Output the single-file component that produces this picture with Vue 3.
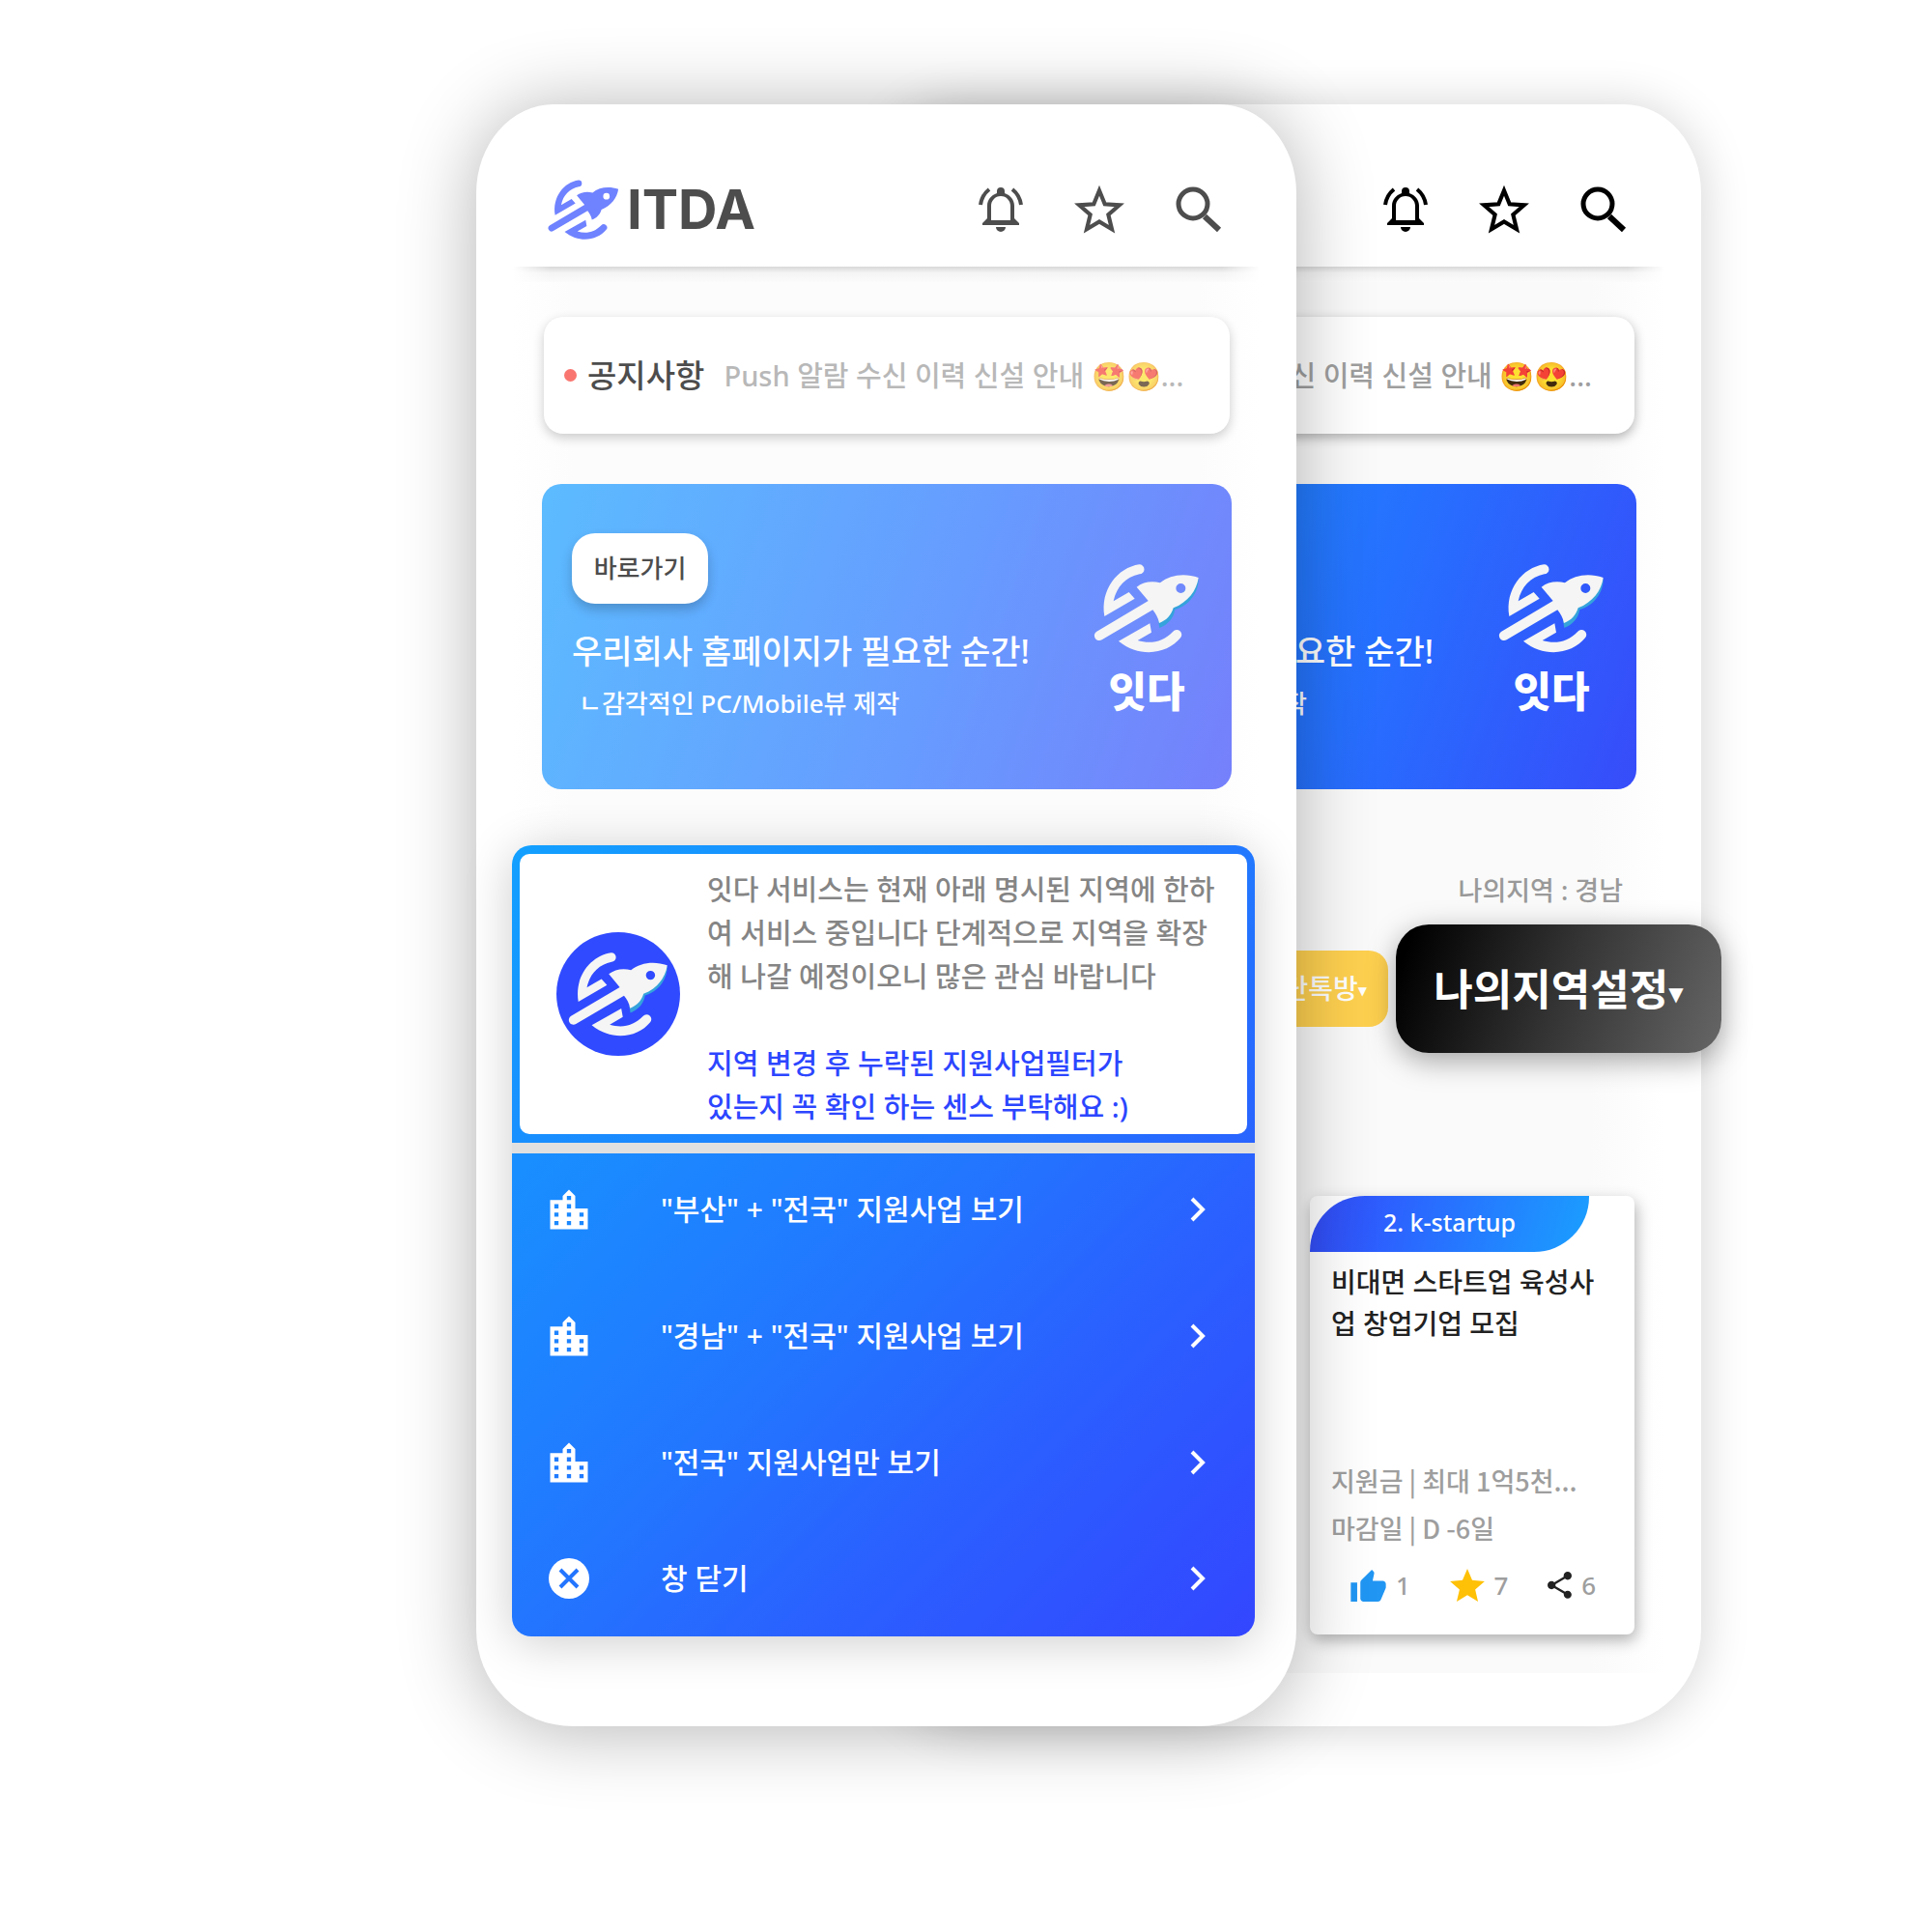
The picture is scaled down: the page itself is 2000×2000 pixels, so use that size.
<script setup>
const regions = [
  { id: 'busan', label: '"부산" + "전국" 지원사업 보기' },
  { id: 'gyeongnam', label: '"경남" + "전국" 지원사업 보기' },
  { id: 'all', label: '"전국" 지원사업만 보기' },
]
</script>

<template>
  <svg class="defs" aria-hidden="true">
    <symbol id="rocket" viewBox="35 65 330 285">
      <path class="flame" d="M361 116C362 160 330 201 288 212C284 237 268 258 240 269L236 246L300 170Z" />
      <path fill="currentColor" d="M177 72C110 82 55 150 69 233L163 178L145 158L97 186C107 140 135 112 178 102A15 15 0 0 0 177 72Z" />
      <path fill="currentColor" fill-rule="evenodd" d="M169 142C188 127 215 122 242 129C272 104 318 98 361 113C356 152 328 190 283 207C277 228 262 246 239 254C236 238 228 224 219 213L61 306A15 15 0 0 1 45 280L205 185ZM306 131A15 15 0 1 0 306 161A15 15 0 1 0 306 131Z" />
      <path fill="currentColor" d="M113 310L210 255L215 283L172 308C212 320 250 313 282 280A15 15 0 0 1 305 300C264 350 180 364 113 310Z" />
    </symbol>
    <symbol id="bell" viewBox="0 0 46 46">
      <path fill="currentColor" d="M23 0a4 4 0 0 1 4 4v2c6 2 10 7 10 13v13l5 5v2H4v-2l5-5V19C9 13 13 8 19 6V4a4 4 0 0 1 4-4ZM23 9c-6 0-10 5-10 10v15h20V19c0-5-4-10-10-10ZM18 41h10a5 5 0 0 1-10 0Z" />
      <path fill="none" stroke="currentColor" stroke-width="4" d="M2 18C3 11 6 6 11 2M44 18C43 11 40 6 35 2" />
    </symbol>
    <symbol id="star" viewBox="1 1 50 48">
      <path fill="none" stroke="currentColor" stroke-width="4" d="M26 6L31.500 19.500L46 20.500L35 30L38.500 44.500L26 37L13.500 44.500L17 30L6 20.500L20.500 19.500Z" />
    </symbol>
    <symbol id="search" viewBox="0 0 48 48">
      <circle cx="18" cy="18" r="15" fill="none" stroke="currentColor" stroke-width="5" />
      <path fill="none" stroke="currentColor" stroke-width="6" d="M30 31L45 45" />
    </symbol>
    <symbol id="chevron" viewBox="0 0 16 26">
      <path fill="none" stroke="currentColor" stroke-width="4" d="M2 2L13 13L2 24" />
    </symbol>
  </svg>

  <main class="stage">
    <section class="phone back">
      <header class="bar">
        <nav class="tools">
          <button type="button" aria-label="알림"><svg class="i-bell"><use href="#bell" /></svg></button>
          <button type="button" aria-label="즐겨찾기"><svg class="i-star"><use href="#star" /></svg></button>
          <button type="button" aria-label="검색"><svg class="i-search"><use href="#search" /></svg></button>
        </nav>
      </header>
      <div class="screen">
        <a class="notice" href="#notice"><span class="news">신 이력 신설 안내 <span class="emoji">🤩😍</span>...</span></a>
        <article class="banner">
          <div class="copy">
            <h2>요한 순간!</h2>
            <p>작</p>
          </div>
          <div class="brand"><svg class="mark"><use href="#rocket" /></svg><strong>잇다</strong></div>
        </article>
        <p class="mine">나의지역 : 경남</p>
        <div class="actions">
          <button type="button" class="talk">단톡방<span class="caret">▼</span></button>
          <button type="button" class="region-set">나의지역설정<span class="caret">▼</span></button>
        </div>
        <article class="card">
          <span class="tag">2. k-startup</span>
          <h3>비대면 스타트업 육성사업 창업기업 모집</h3>
          <div class="facts">
            <p>지원금 | 최대 1억5천...</p>
            <p>마감일 | D -6일</p>
          </div>
          <footer class="stats">
            <span><svg class="thumb" viewBox="1 1 22 20"><path fill="#2196f3" d="M1 21h4V9H1v12zm22-11c0-1.100-.9-2-2-2h-6.310l.95-4.570.03-.32c0-.41-.17-.79-.44-1.060L14.170 1 7.590 7.590C7.220 7.950 7 8.450 7 9v10c0 1.100.9 2 2 2h9c.83 0 1.540-.5 1.840-1.220l3.020-7.050c.09-.23.140-.47.140-.73v-2z" /></svg>1</span>
            <span><svg class="fav" viewBox="2 2 20 19"><path fill="#ffc107" d="M12 17.270L18.180 21l-1.640-7.030L22 9.240l-7.190-.61L12 2 9.190 8.630 2 9.240l5.460 4.730L5.820 21z" /></svg>7</span>
            <span><svg class="share" viewBox="3 2 18 20"><path fill="#222" d="M18 16.080c-.76 0-1.440.3-1.960.77L8.910 12.700c.05-.23.09-.46.09-.7s-.04-.47-.09-.7l7.050-4.110c.54.5 1.250.81 2.040.81 1.660 0 3-1.340 3-3s-1.340-3-3-3-3 1.340-3 3c0 .24.04.47.09.7L8.040 9.810C7.500 9.310 6.790 9 6 9c-1.660 0-3 1.340-3 3s1.340 3 3 3c.79 0 1.500-.31 2.040-.81l7.120 4.160c-.05.21-.08.43-.08.65 0 1.610 1.310 2.920 2.920 2.920s2.920-1.310 2.920-2.920-1.310-2.920-2.920-2.920z" /></svg>6</span>
          </footer>
        </article>
      </div>
    </section>

    <section class="phone front">
      <header class="bar">
        <a class="logo" href="#home"><svg class="mark"><use href="#rocket" /></svg>ITDA</a>
        <nav class="tools">
          <button type="button" aria-label="알림"><svg class="i-bell"><use href="#bell" /></svg></button>
          <button type="button" aria-label="즐겨찾기"><svg class="i-star"><use href="#star" /></svg></button>
          <button type="button" aria-label="검색"><svg class="i-search"><use href="#search" /></svg></button>
        </nav>
      </header>
      <div class="screen">
        <a class="notice" href="#notice">
          <i class="dot"></i><strong>공지사항</strong>
          <span class="news">Push 알람 수신 이력 신설 안내 <span class="emoji">🤩😍</span>...</span>
        </a>
        <article class="banner">
          <div class="copy">
            <button type="button" class="go">바로가기</button>
            <h2>우리회사 홈페이지가 필요한 순간!</h2>
            <p>ㄴ감각적인 PC/Mobile뷰 제작</p>
          </div>
          <div class="brand"><svg class="mark"><use href="#rocket" /></svg><strong>잇다</strong></div>
        </article>
      </div>
      <section class="panel">
        <div class="info">
          <span class="avatar"><svg class="mark"><use href="#rocket" /></svg></span>
          <div class="text">
            <p>잇다 서비스는 현재 아래 명시된 지역에 한하여 서비스 중입니다 단계적으로 지역을 확장해 나갈 예정이오니 많은 관심 바랍니다</p>
            <p class="tip">지역 변경 후 누락된 지원사업필터가<br>있는지 꼭 확인 하는 센스 부탁해요 :)</p>
          </div>
        </div>
        <hr>
        <button v-for="r in regions" :key="r.id" type="button" class="row">
          <svg class="lead" viewBox="2.300 1.800 19.400 19.400">
            <path fill="#fff" d="M15 11V5l-3-3-3 3v2H3v14h18V11h-6zm-8 8H5v-2h2v2zm0-4H5v-2h2v2zm0-4H5V9h2v2zm6 8h-2v-2h2v2zm0-4h-2v-2h2v2zm0-4h-2V9h2v2zm0-4h-2V5h2v2zm6 12h-2v-2h2v2zm0-4h-2v-2h2v2z" />
          </svg>
          <span>{{ r.label }}</span>
          <svg class="chev"><use href="#chevron" /></svg>
        </button>
        <button type="button" class="row close">
          <svg class="lead" viewBox="0 0 42 42">
            <circle cx="21" cy="21" r="21" fill="#fff" />
            <path stroke="#2375ff" stroke-width="4" d="M12 12L30 30M30 12L12 30" />
          </svg>
          <span>창 닫기</span>
          <svg class="chev"><use href="#chevron" /></svg>
        </button>
      </section>
    </section>
  </main>
</template>

<style>
body {
  margin: 0;
  background: #fff;
}
</style>

<style scoped>
* {
  box-sizing: border-box;
}
.defs {
  position: absolute;
  width: 0;
  height: 0;
}
.stage {
  display: grid;
  grid-template-columns: minmax(0, 493fr) minmax(0, 419fr) minmax(0, 430fr) minmax(0, 419fr) minmax(0, 239fr);
  padding: 108px 0 213px;
  overflow: hidden;
  font-family: "Noto Sans", "Noto Sans CJK KR", sans-serif;
  font-weight: 500;
}
h2, h3, p {
  margin: 0;
  font-weight: 500;
}
button {
  padding: 0;
  border: 0;
  background: none;
  color: inherit;
  font: inherit;
}
a {
  color: inherit;
  text-decoration: none;
}
svg {
  display: block;
  flex: none;
}
.phone {
  grid-row: 1;
  background: #fff;
  border-radius: 80px 80px 100px 100px / 92px 92px 100px 100px;
}
.front {
  grid-column: 2 / 4;
  z-index: 1;
  padding-bottom: 93px;
  color: #4d4d4d;
  box-shadow: 0 4px 80px rgba(0, 0, 0, .3);
}
.back {
  grid-column: 3 / 5;
  color: #000;
  box-shadow: 0 2px 50px rgba(0, 0, 0, .18);
}
.bar {
  position: relative;
  display: flex;
  justify-content: space-between;
  align-items: center;
  height: 169px;
  padding: 48px 77px 0 74px;
}
.bar::after {
  content: "";
  position: absolute;
  inset: 168px 38px auto;
  height: 16px;
  background: linear-gradient(90deg, #fff, transparent 5%, transparent 95%, #fff), linear-gradient(#d8d8d8, #f4f4f4 40%, #fbfbfb);
}
.back .bar {
  justify-content: flex-end;
}
.logo {
  display: flex;
  align-items: center;
  gap: 8px;
  font: 700 56px/60px Inter, sans-serif;
}
.logo .mark {
  --flame: transparent;
  width: 74px;
  height: 64px;
  color: #6f82ff;
}
.mark {
  color: #f5f5f5;
}
.flame {
  fill: var(--flame, #35a3dc);
}
.tools {
  display: flex;
  align-items: center;
  gap: 53px;
}
.i-bell {
  width: 46px;
  height: 46px;
}
.i-star {
  width: 52px;
  height: 50px;
}
.i-search {
  width: 48px;
  height: 48px;
}
.screen {
  margin: 0 38px;
  padding: 51px 29px 0 30px;
  background: linear-gradient(90deg, #fff, #fcfcfc 8%, #fcfcfc 92%, #fff);
}
.front .screen {
  padding-bottom: 58px;
}
.back .screen {
  padding-bottom: 40px;
  background: linear-gradient(90deg, #fafafa 90%, #fff);
}
.notice {
  display: flex;
  align-items: center;
  height: 121px;
  margin: 0 2px;
  padding: 0 44px 0 21px;
  border-radius: 20px;
  background: #fff;
  box-shadow: 0 4px 12px rgba(0, 0, 0, .2);
  font-size: 29px;
  line-height: 44px;
  white-space: nowrap;
}
.notice strong {
  margin: 0 20px 0 11px;
  font-size: 33px;
  font-weight: 500;
}
.dot {
  width: 13px;
  height: 13px;
  border-radius: 50%;
  background: #f97670;
}
.news {
  color: #b8b8b8;
}
.front .emoji {
  opacity: .7;
}
.back .notice {
  justify-content: flex-end;
  box-shadow: 0 4px 12px rgba(0, 0, 0, .3);
}
.back .news {
  color: #9e9e9e;
}
.banner {
  display: flex;
  justify-content: space-between;
  height: 316px;
  margin-top: 52px;
  padding: 51px 33px 0 31px;
  border-radius: 20px;
  background: linear-gradient(109deg, #5cbbff, #669cff 56%, #7580fb);
  color: #fff;
}
.back .banner {
  background: linear-gradient(109deg, #1a9cff, #2670ff 60%, #374cfa);
}
.back .copy {
  flex: 1;
  padding-top: 96px;
}
.back .copy h2 {
  margin-right: 67px;
  text-align: right;
}
.back .copy p {
  margin-right: 198px;
  text-align: right;
}
.go {
  display: block;
  width: 141px;
  height: 73px;
  margin-bottom: 23px;
  padding-bottom: 4px;
  border-radius: 24px;
  background: #fff;
  box-shadow: 0 6px 12px rgba(0, 0, 0, .2);
  color: #4d4d4d;
  font-size: 26px;
}
.copy {
  white-space: nowrap;
}
.copy h2 {
  font-size: 34px;
  line-height: 52px;
}
.copy p {
  padding: 6px 0 0 7px;
  font-size: 26px;
  line-height: 44px;
}
.brand {
  display: flex;
  flex-direction: column;
  align-items: center;
  padding-top: 30px;
}
.brand .mark {
  width: 110px;
  height: 95px;
}
.brand strong {
  margin-top: 8px;
  font: 900 43px/56px "Noto Sans CJK KR", sans-serif;
}
.panel {
  margin: 0 43px 0 37px;
  padding-top: 9px;
  border-radius: 20px;
  background: linear-gradient(135deg, #12a0ff, #2277ff 50%, #2a61ff 70%, #3346ff);
  box-shadow: 0 6px 50px rgba(0, 0, 0, .2);
  color: #fff;
  font-size: 30px;
  overflow: hidden;
}
.info {
  display: flex;
  align-items: center;
  min-height: 290px;
  margin: 0 8px;
  padding: 0 18px 0 38px;
  gap: 28px;
  border-radius: 10px;
  background: #fff;
  font-size: 29px;
  line-height: 45px;
}
.avatar {
  display: flex;
  flex: none;
  align-items: center;
  justify-content: center;
  width: 128px;
  height: 128px;
  border-radius: 50%;
  background: #304aff;
}
.avatar .mark {
  width: 104px;
  height: 90px;
}
.text {
  flex: 1;
  padding-top: 8px;
  color: #858585;
  word-break: break-all;
}
.tip {
  margin-top: 45px;
  color: #2c46ff;
}
hr {
  height: 11px;
  margin: 9px 0 0;
  border: 0;
  background: #e0e0e0;
}
.row {
  display: flex;
  align-items: center;
  width: 100%;
  height: 116px;
  padding: 0 51px 0 38px;
  text-align: left;
}
.row + .row {
  margin-top: 15px;
}
.row + .close {
  height: 120px;
  margin-top: 2px;
}
.row span {
  flex: 1;
  margin-left: 74px;
  padding-bottom: 4px;
}
.lead {
  width: 42px;
  height: 42px;
}
.chev {
  width: 16px;
  height: 26px;
}
.mine {
  margin: 83px 14px 13px 0;
  color: #999;
  font-size: 27px;
  line-height: 44px;
  text-align: right;
}
.actions {
  display: flex;
  justify-content: flex-end;
  align-items: center;
  gap: 8px;
  margin-right: -88px;
}
.talk {
  width: 190px;
  height: 79px;
  padding: 0 22px 3px 0;
  border-radius: 20px;
  background: #ffd150;
  color: #fff;
  font-size: 28px;
  text-align: right;
}
.caret {
  font-family: "DejaVu Sans", sans-serif;
  font-size: 12px;
  vertical-align: middle;
}
.region-set {
  width: 337px;
  height: 133px;
  padding-bottom: 4px;
  border-radius: 34px;
  background: linear-gradient(110deg, #000 5%, #333 50%, #666);
  box-shadow: 0 8px 30px rgba(0, 0, 0, .35);
  color: #fff;
  font-size: 44px;
  font-weight: 700;
}
.region-set .caret {
  font-size: 20px;
}
.card {
  width: 336px;
  margin: 148px 2px 0 auto;
  border-radius: 8px;
  background: #fff;
  box-shadow: 2px 6px 16px rgba(0, 0, 0, .3);
  overflow: hidden;
}
.tag {
  display: block;
  width: 289px;
  padding-bottom: 4px;
  border-radius: 57px 0;
  background: linear-gradient(105deg, #334af5, #2c62ff 30%, #1a9fff);
  color: #fff;
  font-size: 25px;
  line-height: 54px;
  text-align: center;
}
.card h3 {
  height: 192px;
  padding: 10px 30px 0 22px;
  color: #222;
  font-size: 28px;
  line-height: 43px;
  word-break: break-all;
}
.facts {
  padding: 20px 22px 0;
  color: #9e9e9e;
  font-family: "Noto Sans CJK KR", sans-serif;
  font-size: 27px;
  line-height: 49px;
  white-space: nowrap;
}
.stats {
  display: flex;
  justify-content: space-between;
  padding: 13px 40px 29px 42px;
  color: #9e9e9e;
  font-size: 26px;
  line-height: 44px;
}
.stats span {
  display: flex;
  align-items: center;
  gap: 10px;
}
.thumb {
  width: 37px;
  height: 33px;
}
.fav {
  width: 36px;
  height: 34px;
}
.share {
  width: 25px;
  height: 28px;
}
</style>
